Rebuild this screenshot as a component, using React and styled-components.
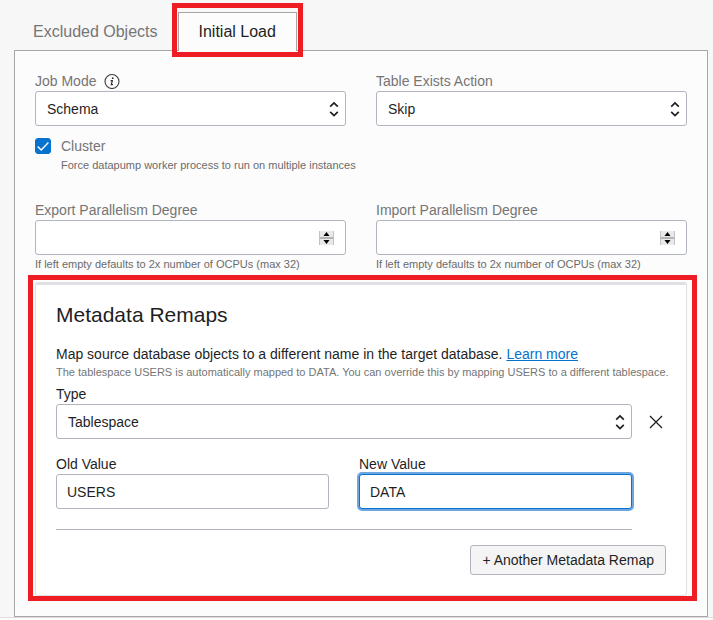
import React, { useState } from "react";
import styled, { createGlobalStyle, css } from "styled-components";

const GlobalStyle = createGlobalStyle`
  *, *::before, *::after { box-sizing: border-box; }
  body {
    margin: 0;
    background: #fcfcfc;
    color: #1f1f1f;
    font-family: "Liberation Sans", Arial, Helvetica, sans-serif;
    font-size: 14px;
    line-height: 20px;
  }
  button, input, select { font: inherit; color: inherit; margin: 0; }
`;

const Page = styled.main`
  padding: 12px 5px 0 14px;
  border-bottom: 1px solid #dedede;
  background: #f7f7f7;
`;

const TabList = styled.div`
  display: flex;
  align-items: flex-end;
  margin: 0 0 -1px -1px;
`;

const Tab = styled.button`
  position: relative;
  height: 39px;
  padding: 0 20px;
  border: 0 solid #a6a6a6;
  background: transparent;
  color: #757575;
  font-size: 16px;
  ${(p) =>
    p.$active &&
    css`
      border-width: 1px 1px 0;
      background: #fcfcfc;
      color: #1f1f1f;
    `}
`;

const Highlight = styled.span`
  position: absolute;
  inset: ${(p) => p.$inset};
  border: 5px solid #ee1c23;
  pointer-events: none;
`;

const Panel = styled.section`
  padding: 20px;
  border: 1px solid #a6a6a6;
  background: #fcfcfc;
`;

const Columns = styled.div`
  display: grid;
  grid-template-columns: 1fr 1fr;
  gap: 30px;
`;

const Field = styled.div`
  display: flex;
  flex-direction: column;
  min-width: 0;
`;

const LabelRow = styled.div`
  display: flex;
  align-items: center;
  gap: 8px;
  height: 20px;
`;

const Label = styled.label`
  color: ${(p) => (p.$dark ? "#1f1f1f" : "#757575")};
`;

const Help = styled.p`
  margin: 0;
  color: #6b6b6b;
  font-size: 11px;
  line-height: 18px;
`;

const controlBox = css`
  width: 100%;
  height: 35px;
  border: 1px solid #b0b5bf;
  border-radius: 3px;
  background: #fff;
`;

const SelectWrap = styled.div`
  position: relative;
  display: flex;
`;

const SelectBox = styled.select`
  ${controlBox}
  appearance: none;
  padding: 0 30px 0 11px;
`;

const SelectArrows = styled.svg`
  position: absolute;
  top: 10px;
  right: 7px;
  pointer-events: none;
`;

const TextInput = styled.input`
  ${controlBox}
  padding: 0 10px;
  outline: none;
  ${(p) =>
    p.$focused &&
    css`
      border-color: #0572ce;
      box-shadow: 0 0 0 2px #6fa6e2;
    `}
`;

const NumberBox = styled.div`
  ${controlBox}
  display: flex;
  align-items: center;
  padding-right: 11px;
`;

const NumberInput = styled.input`
  flex: 1;
  min-width: 0;
  height: 100%;
  padding: 0 10px;
  border: 0;
  background: transparent;
  outline: none;
  appearance: textfield;
  &::-webkit-inner-spin-button { appearance: none; margin: 0; }
`;

const Stepper = styled.div`
  display: flex;
  flex-direction: column;
  width: 15px;
  border: 1px solid #c2c2c2;
  border-width: 0 1px;
  background: #b4b4b4;
  gap: 2px;
`;

const StepButton = styled.button`
  display: grid;
  place-items: center;
  height: 6px;
  padding: 0;
  border: 0;
  background: #e9e9e9;
`;

const CheckRow = styled.div`
  display: grid;
  grid-template-columns: 16px 1fr;
  column-gap: 10px;
  align-items: center;
  margin: 10px 0 26px;
`;

const Checkbox = styled.input`
  appearance: none;
  width: 16px;
  height: 16px;
  border: 1px solid #0572ce;
  border-radius: 3px;
  background: #fff;
  &:checked {
    background: #0572ce
      url("data:image/svg+xml,%3Csvg xmlns='http://www.w3.org/2000/svg' viewBox='0 0 14 14'%3E%3Cpath d='M1.7 7.5l3.5 3.6L12.4 3.6' fill='none' stroke='white' stroke-width='1.4'/%3E%3C/svg%3E");
  }
`;

const CheckHelp = styled(Help)`
  grid-column: 2;
`;

const Card = styled.section`
  position: relative;
  margin-top: 9px;
  padding: 18px 20px 20px;
  border: 1px solid #e0e1e5;
  border-top: 3px solid #e0e1e5;
  border-radius: 3px;
  background: #fff;
`;

const Heading = styled.h2`
  margin: 0 0 17px;
  font-size: 21px;
  font-weight: 400;
  line-height: 24px;
`;

const Text = styled.p`
  margin: 0;
`;

const CardHelp = styled(Help)`
  margin: 0 -20px 4px 0;
  line-height: 16px;
  color: #757575;
`;

const Link = styled.a`
  color: #0572ce;
  text-decoration: underline;
`;

const RemapRow = styled.div`
  display: grid;
  grid-template-columns: 1fr 20px;
  column-gap: 14px;
`;

const RemapFields = styled.div`
  display: flex;
  flex-direction: column;
  gap: 15px;
  padding-bottom: 20px;
  border-bottom: 1px solid #b0b5bf;
`;

const CloseButton = styled.button`
  display: grid;
  place-items: center;
  height: 35px;
  margin-top: 20px;
  padding: 0;
  border: 0;
  background: transparent;
`;

const Actions = styled.div`
  display: flex;
  justify-content: flex-end;
  margin-top: 15px;
`;

const AddButton = styled.button`
  height: 30px;
  padding: 0 11px;
  border: 1px solid #b0b5bf;
  border-radius: 3px;
  background: #f4f4f4;
`;

function InfoIcon() {
  return (
    <svg width="16" height="16" viewBox="0 0 16 16" fill="none" aria-label="Information" role="img">
      <circle cx="8" cy="8.5" r="7" stroke="#3c3c3c" strokeWidth="1.1" />
      <circle cx="8.7" cy="5.2" r="0.9" fill="#2b2b2b" />
      <path d="M6.6 7.6h1.7L7.3 11.6h1.6" stroke="#2b2b2b" strokeWidth="1.2" />
    </svg>
  );
}

function SelectField({ id, label, value, options, dark, info }) {
  return (
    <Field>
      <LabelRow>
        <Label htmlFor={id} $dark={dark}>{label}</Label>
        {info && <InfoIcon />}
      </LabelRow>
      <SelectWrap>
        <SelectBox id={id} defaultValue={value}>
          {options.map((o) => <option key={o}>{o}</option>)}
        </SelectBox>
        <SelectArrows width="10" height="16" viewBox="0 0 10 16" fill="none" aria-hidden="true">
          <path d="M1.2 5.6L5 1.9l3.8 3.7M1.2 10.8L5 14.5l3.8-3.7" stroke="#1f1f1f" strokeWidth="1.7" />
        </SelectArrows>
      </SelectWrap>
    </Field>
  );
}

function NumberField({ id, label }) {
  const [value, setValue] = useState("");
  const step = (d) => setValue((v) => String(Math.min(32, Math.max(1, Number(v) + d))));
  return (
    <Field>
      <Label htmlFor={id}>{label}</Label>
      <NumberBox>
        <NumberInput id={id} type="number" min="1" max="32" value={value} onChange={(e) => setValue(e.target.value)} />
        <Stepper>
          <StepButton type="button" aria-label={`Increase ${label}`} onClick={() => step(1)}>
            <svg width="7" height="4" viewBox="0 0 7 4"><path d="M0.5 4L3.5 0l3 4z" /></svg>
          </StepButton>
          <StepButton type="button" aria-label={`Decrease ${label}`} onClick={() => step(-1)}>
            <svg width="7" height="4" viewBox="0 0 7 4"><path d="M0.5 0h6l-3 4z" /></svg>
          </StepButton>
        </Stepper>
      </NumberBox>
      <Help>If left empty defaults to 2x number of OCPUs (max 32)</Help>
    </Field>
  );
}

function ValueField({ id, label, value, focused }) {
  return (
    <Field>
      <Label htmlFor={id} $dark>{label}</Label>
      <TextInput id={id} type="text" defaultValue={value} $focused={focused} />
    </Field>
  );
}

export default function App() {
  return (
    <Page>
      <GlobalStyle />
      <TabList role="tablist">
        <Tab type="button" role="tab" aria-selected="false">Excluded Objects</Tab>
        <Tab type="button" role="tab" aria-selected="true" $active>
          Initial Load
          <Highlight $inset="-10px -7px -6px" />
        </Tab>
      </TabList>
      <Panel role="tabpanel">
        <Columns>
          <SelectField id="job-mode" label="Job Mode" value="Schema" options={["Schema", "Full"]} info />
          <SelectField id="table-exists" label="Table Exists Action" value="Skip" options={["Skip", "Append", "Replace", "Truncate"]} />
        </Columns>
        <CheckRow>
          <Checkbox id="cluster" type="checkbox" defaultChecked />
          <Label htmlFor="cluster">Cluster</Label>
          <CheckHelp>Force datapump worker process to run on multiple instances</CheckHelp>
        </CheckRow>
        <Columns>
          <NumberField id="export-degree" label="Export Parallelism Degree" />
          <NumberField id="import-degree" label="Import Parallelism Degree" />
        </Columns>
        <Card>
          <Highlight $inset="-10px -11px -6px -8px" />
          <Heading>Metadata Remaps</Heading>
          <Text>
            Map source database objects to a different name in the target database.{" "}
            <Link href="#learn-more">Learn more</Link>
          </Text>
          <CardHelp>
            The tablespace USERS is automatically mapped to DATA. You can override this by mapping USERS to a different tablespace.
          </CardHelp>
          <RemapRow>
            <RemapFields>
              <SelectField id="remap-type" label="Type" value="Tablespace" options={["Tablespace", "Schema", "Datafile", "Table"]} dark />
              <Columns>
                <ValueField id="old-value" label="Old Value" value="USERS" />
                <ValueField id="new-value" label="New Value" value="DATA" focused />
              </Columns>
            </RemapFields>
            <CloseButton type="button" aria-label="Remove metadata remap">
              <svg width="14" height="14" viewBox="0 0 14 14" fill="none">
                <path d="M1 1l12 12M13 1L1 13" stroke="#1f1f1f" strokeWidth="1.3" />
              </svg>
            </CloseButton>
          </RemapRow>
          <Actions>
            <AddButton type="button">+ Another Metadata Remap</AddButton>
          </Actions>
        </Card>
      </Panel>
    </Page>
  );
}
